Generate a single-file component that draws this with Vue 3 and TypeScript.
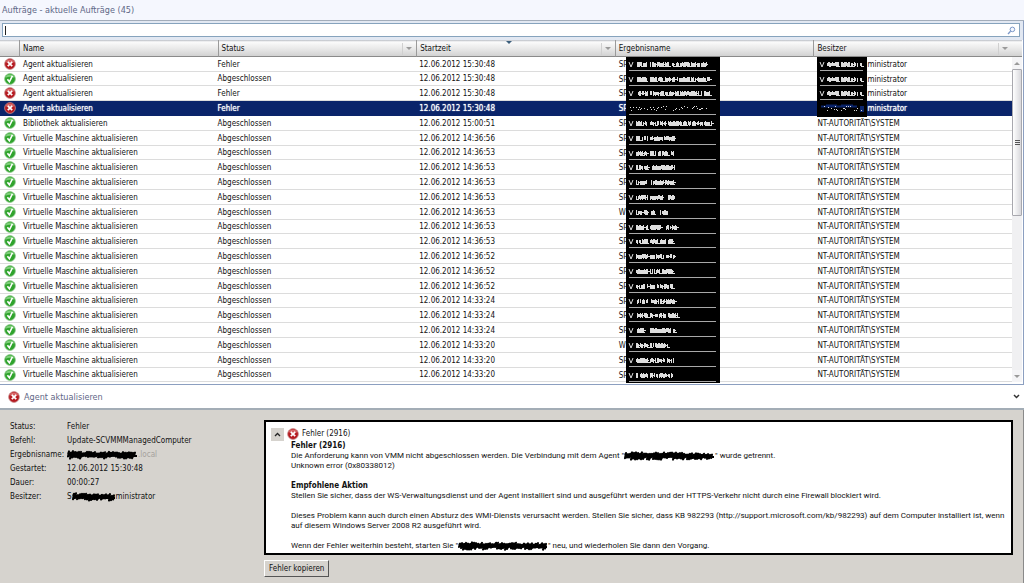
<script setup lang="ts">
import { ref } from 'vue'

interface Job {
  ok: boolean
  name: string
  status: string
  start: string
  prefix: string
  masked: number
  owner: string
  ownerMasked: boolean
}

const query = ref('')
const selected = ref(3)

const vm = 'Virtuelle Maschine aktualisieren'
const agent = 'Agent aktualisieren'

function job(ok: boolean, name: string, time: string, masked: number, prefix = 'SP', ownerMasked = false): Job {
  return {
    ok,
    name,
    status: ok ? 'Abgeschlossen' : 'Fehler',
    start: '12.06.2012 ' + time,
    prefix,
    masked,
    owner: ownerMasked ? 'ministrator' : 'NT-AUTORITÄT\\SYSTEM',
    ownerMasked,
  }
}

const jobs: Job[] = [
  job(false, agent, '15:30:48', 79, 'SP', true),
  job(true, agent, '15:30:48', 82, 'SP', true),
  job(false, agent, '15:30:48', 82, 'SP', true),
  job(false, agent, '15:30:48', 79, 'SP', true),
  job(true, 'Bibliothek aktualisieren', '15:00:51', 84),
  job(true, vm, '14:36:56', 48),
  job(true, vm, '14:36:53', 46),
  job(true, vm, '14:36:53', 47),
  job(true, vm, '14:36:53', 46),
  job(true, vm, '14:36:53', 47),
  job(true, vm, '14:36:53', 40, 'W'),
  job(true, vm, '14:36:53', 49),
  job(true, vm, '14:36:53', 45),
  job(true, vm, '14:36:52', 47),
  job(true, vm, '14:36:52', 47),
  job(true, vm, '14:36:52', 45),
  job(true, vm, '14:33:24', 47),
  job(true, vm, '14:33:24', 50),
  job(true, vm, '14:33:24', 47),
  job(true, vm, '14:33:20', 40, 'W'),
  job(true, vm, '14:33:20', 46),
  job(true, vm, '14:33:20', 45),
]

const columns = [
  { label: 'Name', filter: false, sorted: false },
  { label: 'Status', filter: true, sorted: false },
  { label: 'Startzeit', filter: true, sorted: true },
  { label: 'Ergebnisname', filter: false, sorted: false },
  { label: 'Besitzer', filter: true, sorted: false },
]

function random(seed: number): () => number {
  let s = seed * 7919 + 17
  return () => {
    s = (s * 16807) % 2147483647
    return s / 2147483647
  }
}

/* Broken white strokes that stay visible on a blacked-out cell. */
function residue(width: number, seed: number, sparse = false): string {
  const next = random(seed)
  let d = sparse ? '' : 'M3 5L5 10L7 5'
  for (let x = sparse ? 3 : 10; x < width + 2; x += 1) {
    if (x === 8 || x === 9 || x === 22 || x === 23) continue
    if (next() < (sparse ? 0.6 : 0.22)) continue
    if (sparse) {
      d += `M${x}.5 ${5 + Math.floor(next() * 5)}v1`
      continue
    }
    const top = 5 + Math.floor(next() * 2)
    const bottom = 9 + Math.floor(next() * 2)
    d += `M${x}.5 ${top}V${bottom}`
    if (next() < 0.45) d += `M${x} ${next() < 0.5 ? 7.5 : 9.5}h3`
  }
  return d
}

/* Dense marker scribble over a piece of text. */
function scribble(width: number, seed: number): string {
  const next = random(seed)
  let d = 'M1 4'
  for (let x = 2; x < width - 1; x += 2) {
    const lean = x / width
    d += `L${x} ${(1 + next() * 2 + lean).toFixed(1)}L${x - 1} ${(6 + next() * 2.8).toFixed(1)}`
  }
  return d + `M2 5L${width - 1} 6`
}
</script>

<template>
  <main class="console">
    <h1 class="title">Aufträge - aktuelle Aufträge (45)</h1>

    <div class="search-band">
      <label class="search">
        <span class="caret"></span>
        <input v-model="query" type="text" aria-label="Aufträge suchen" />
        <svg width="9" height="9" viewBox="0 0 9 9" aria-hidden="true">
          <circle cx="5.4" cy="3.4" r="2.3" fill="#f4f8ff" stroke="#7c98c8" />
          <path d="M3.6 5.2L1 8" stroke="#7c98c8" stroke-width="1.3" />
        </svg>
      </label>
    </div>

    <section class="jobs" aria-label="Aufträge">
      <table>
        <colgroup>
          <col class="icon-col" />
          <col v-for="c in columns" :key="c.label" />
        </colgroup>
        <thead>
          <tr>
            <th></th>
            <th v-for="c in columns" :key="c.label" scope="col">
              <div class="head">
                <span>{{ c.label }}</span>
                <i v-if="c.sorted" class="sort"></i>
                <button v-if="c.filter" type="button" class="filter" :aria-label="c.label + ' filtern'"></button>
              </div>
            </th>
          </tr>
        </thead>
        <tbody>
          <tr v-for="(j, i) in jobs" :key="i" :class="{ selected: i === selected }" @click="selected = i">
            <td class="state">
              <svg v-if="j.ok" width="12" height="12" viewBox="0 0 12 12" aria-label="OK">
                <circle cx="6" cy="6" r="5.4" fill="#2fa32c" stroke="#8cc88a" stroke-width=".8" />
                <path d="M1.6 4.8A4.6 4.6 0 0 1 10.4 4.8Q6 2.8 1.6 4.8" fill="#7fd07a" />
                <path d="M3.4 6.2L5.4 8.8L8.4 2.8" fill="none" stroke="#fff" stroke-width="1.6" />
              </svg>
              <svg v-else width="12" height="12" viewBox="0 0 12 12" aria-label="Fehler">
                <circle cx="6" cy="6" r="5.4" fill="#b51a20" stroke="#c99090" stroke-width=".8" />
                <path d="M1.6 4.8A4.6 4.6 0 0 1 10.4 4.8Q6 2.8 1.6 4.8" fill="#d9696a" />
                <path d="M3.8 3.8L8.2 8.2M8.2 3.8L3.8 8.2" stroke="#fff" stroke-width="1.8" />
              </svg>
            </td>
            <td>{{ j.name }}</td>
            <td>{{ j.status }}</td>
            <td>{{ j.start }}</td>
            <td class="top">
              <div class="masked">
                <span class="prefix">{{ j.prefix }}</span>
                <span class="block wide">
                  <svg width="94" height="16" viewBox="0 0 94 16" aria-hidden="true">
                    <path :d="residue(j.masked, i + 1, i === selected)" stroke="#dedede" fill="none" />
                    <path d="M3 13.5H90" stroke="#a8a8a8" />
                  </svg>
                </span>
              </div>
            </td>
            <td :class="{ top: j.ownerMasked }">
              <div v-if="j.ownerMasked" class="masked">
                <span class="block narrow">
                  <svg width="50" height="16" viewBox="0 0 50 16" aria-hidden="true">
                    <path v-if="i === selected" d="M4 5.5H40M9 4.5H20M24 4.5H36M44 5V11M46 5V11" stroke="#0a246a" stroke-width="2" />
                    <path :d="residue(43, i < 3 ? 41 : 9, i === selected)" stroke="#dcdcdc" fill="none" />
                    <path v-if="i !== selected" d="M3 13.5H46" stroke="#a8a8a8" />
                  </svg>
                </span>
                <span class="cell-text">{{ j.owner }}</span>
              </div>
              <template v-else>{{ j.owner }}</template>
            </td>
          </tr>
        </tbody>
      </table>
      <div class="scroll">
        <div class="scroll-head"></div>
        <button type="button" class="arrow up" aria-label="Nach oben"></button>
        <div class="track"><div class="thumb"><i></i></div></div>
        <button type="button" class="arrow down" aria-label="Nach unten"></button>
      </div>
    </section>

    <header class="detail-bar">
      <svg width="12" height="12" viewBox="0 0 12 12" aria-hidden="true">
        <circle cx="6" cy="6" r="5.4" fill="#b51a20" stroke="#c99090" stroke-width=".8" />
        <path d="M1.6 4.8A4.6 4.6 0 0 1 10.4 4.8Q6 2.8 1.6 4.8" fill="#d9696a" />
        <path d="M3.8 3.8L8.2 8.2M8.2 3.8L3.8 8.2" stroke="#fff" stroke-width="1.8" />
      </svg>
      <h2>Agent aktualisieren</h2>
      <button type="button" class="plain" aria-label="Details einklappen">
        <svg width="7" height="5" viewBox="0 0 7 5"><path d="M1 1L3.5 3.5L6 1" fill="none" stroke="#333" stroke-width="1.5" /></svg>
      </button>
    </header>

    <section class="details">
      <dl>
        <dt>Status:</dt>
        <dd>Fehler</dd>
        <dt>Befehl:</dt>
        <dd>Update-SCVMMManagedComputer</dd>
        <dt>Ergebnisname:</dt>
        <dd>
          <svg width="71" height="10" viewBox="0 0 71 10" aria-hidden="true"><path :d="scribble(71, 3)" class="ink" /></svg>
          <span class="faint">.local</span>
        </dd>
        <dt>Gestartet:</dt>
        <dd>12.06.2012 15:30:48</dd>
        <dt>Dauer:</dt>
        <dd>00:00:27</dd>
        <dt>Besitzer:</dt>
        <dd>
          <span>S</span>
          <svg width="44" height="10" viewBox="0 0 44 10" aria-hidden="true"><path :d="scribble(44, 5)" class="ink" /></svg>
          <span>ministrator</span>
        </dd>
      </dl>

      <div class="error-side">
        <article class="error-box">
          <div class="error-head">
            <button type="button" class="toggle" aria-label="Fehler einklappen">
              <svg width="7" height="5" viewBox="0 0 7 5"><path d="M1 4L3.5 1.5L6 4" fill="none" stroke="#222" stroke-width="1.3" /></svg>
            </button>
            <svg width="12" height="12" viewBox="0 0 12 12" aria-hidden="true">
              <circle cx="6" cy="6" r="5.4" fill="#b51a20" stroke="#c99090" stroke-width=".8" />
              <path d="M1.6 4.8A4.6 4.6 0 0 1 10.4 4.8Q6 2.8 1.6 4.8" fill="#d9696a" />
              <path d="M3.8 3.8L8.2 8.2M8.2 3.8L3.8 8.2" stroke="#fff" stroke-width="1.8" />
            </svg>
            <span>Fehler (2916)</span>
          </div>
          <div class="error-text">
            <h3>Fehler (2916)</h3>
            <p>
              Die Anforderung kann von VMM nicht abgeschlossen werden. Die Verbindung mit dem Agent "<svg width="91" height="10" viewBox="0 0 91 10" aria-hidden="true"><path :d="scribble(91, 8)" class="ink" /></svg>" wurde getrennt.<br />
              Unknown error (0x80338012)
            </p>
            <h3>Empfohlene Aktion</h3>
            <p>Stellen Sie sicher, dass der WS-Verwaltungsdienst und der Agent installiert sind und ausgeführt werden und der HTTPS-Verkehr nicht durch eine Firewall blockiert wird.</p>
            <p>Dieses Problem kann auch durch einen Absturz des WMI-Diensts verursacht werden. Stellen Sie sicher, dass KB 982293 (http://support.microsoft.com/kb/982293) auf dem Computer installiert ist, wenn auf diesem Windows Server 2008 R2 ausgeführt wird.</p>
            <p>
              Wenn der Fehler weiterhin besteht, starten Sie "<svg width="90" height="10" viewBox="0 0 90 10" aria-hidden="true"><path :d="scribble(90, 12)" class="ink" /></svg>" neu, und wiederholen Sie dann den Vorgang.
            </p>
          </div>
        </article>
        <button type="button" class="copy">Fehler kopieren</button>
      </div>
    </section>
  </main>
</template>

<style>
body {
  margin: 0;
  background: #d6d3ce;
}
</style>

<style scoped>
* {
  box-sizing: border-box;
}
.console {
  display: flex;
  flex-direction: column;
  min-height: 100vh;
  font: 8px/10px "DejaVu Sans Condensed", "DejaVu Sans", sans-serif;
  color: #111;
}
button {
  font: inherit;
  color: inherit;
  padding: 0;
}
h1,
h2,
h3,
p,
dl,
dd {
  margin: 0;
}
.title {
  height: 21px;
  padding-left: 2px;
  background: #f5f7fe;
  border-bottom: 1px solid #a3adba;
  color: #5f6787;
  font-size: 9px;
  font-weight: 400;
  line-height: 20px;
}
.search-band {
  padding: 2px 3px 3px 2px;
  background: #e2e8f2;
  border-right: 1px solid #8c9fc0;
}
.search {
  display: flex;
  align-items: center;
  height: 14px;
  padding: 0 3px 0 2px;
  background: #fff;
  border: 1px solid #86a3bd;
}
.caret {
  width: 1px;
  height: 9px;
  background: #222;
}
.search input {
  flex: 1;
  min-width: 0;
  height: 11px;
  padding: 0 2px;
  border: 0;
  outline: 0;
  background: transparent;
  font: inherit;
}
.jobs {
  display: flex;
  padding: 0 1px 2px 0;
  background: #fff;
  border-right: 1px solid #8c9fc0;
  border-bottom: 1px solid #8c9fc0;
}
table {
  flex: 1;
  width: 100%;
  min-width: 0;
  table-layout: fixed;
  border-collapse: separate;
  border-spacing: 0;
}
.icon-col {
  width: 19px;
}
th,
.scroll-head {
  height: 17px;
  padding: 0;
  background: linear-gradient(#b9bdc4, #fbfbfb 12%, #e6e6e6 60%, #d2d2d2);
  border-bottom: 1px solid #8a8a8a;
  font-weight: 400;
  text-align: left;
}
th + th {
  border-left: 1px solid #9a9a9a;
}
.head {
  position: relative;
  display: flex;
  align-items: center;
  justify-content: space-between;
  height: 16px;
  padding: 1px 0 0 3px;
}
.filter {
  width: 13px;
  height: 12px;
  margin-right: 1px;
  border: 0;
  border-left: 1px solid #d0d0d0;
  background: none;
}
.filter::after,
.sort::after,
.arrow::after {
  content: "";
  display: block;
  width: 0;
  margin: auto;
  border: 3px solid transparent;
  border-bottom: 0;
  border-top-color: #9a9a9a;
}
.sort {
  position: absolute;
  top: 1px;
  left: 45%;
}
.sort::after {
  border-top-color: #3c5f7c;
}
td {
  height: 15px;
  padding: 1px 0 0;
  border-bottom: 1px solid #dcdcdc;
  background: #fff;
  white-space: nowrap;
}
tbody tr:nth-child(5n + 2) td {
  height: 14px;
}
td:nth-child(2),
td:nth-child(5),
td:nth-child(6) {
  padding-left: 4px;
}
td:nth-child(4) {
  padding-left: 3px;
}
td.top {
  padding-top: 0;
  vertical-align: top;
}
.state {
  padding: 0 0 0 4px;
}
svg {
  display: block;
  flex: none;
}
.selected td {
  background: #0a246a;
  border-bottom-color: #0a246a;
  color: #fff;
  text-shadow: 0 0 1px #fff;
}
.masked {
  display: flex;
  align-items: flex-start;
  height: 13px;
}
.prefix,
.cell-text {
  padding-top: 3px;
}
.prefix {
  width: 7px;
}
.block {
  position: relative;
  height: 16px;
  background: #000;
}
tbody tr:last-child .block {
  height: 15px;
}
.wide {
  width: 94px;
}
.narrow {
  width: 50px;
}
.scroll {
  display: flex;
  flex-direction: column;
  width: 10px;
  background: #f0f0f2;
}
.arrow {
  height: 12px;
  border: 0;
  background: #f4f4f6;
}
.up::after {
  transform: rotate(180deg);
}
.track {
  flex: 1;
}
.thumb {
  display: flex;
  align-items: center;
  justify-content: center;
  height: 49%;
  border: 1px solid #a8a8ae;
  border-radius: 1px;
  background: linear-gradient(90deg, #fff, #d8d8dc);
}
.thumb i {
  width: 5px;
  height: 6px;
  background: repeating-linear-gradient(#555 0 1px, transparent 1px 2px);
}
.detail-bar {
  display: flex;
  align-items: center;
  gap: 4px;
  height: 25px;
  padding: 0 4px 0 8px;
  background: #fff;
  border-bottom: 2px solid #a3adb6;
}
.detail-bar h2 {
  flex: 1;
  color: #5f6787;
  font-size: 9px;
  font-weight: 400;
}
.plain {
  border: 0;
  background: none;
}
.details {
  flex: 1;
  display: grid;
  grid-template-columns: 254px 1fr;
  padding: 10px 10px 5px;
  background: #d6d3ce;
  border-right: 1px solid #8a8a8a;
}
dl {
  display: grid;
  grid-template-columns: 57px 1fr;
  grid-auto-rows: 14px;
  line-height: 14px;
}
dd {
  display: flex;
  align-items: center;
}
.ink {
  fill: none;
  stroke: #000;
  stroke-width: 2;
  stroke-linejoin: round;
}
.faint {
  color: #a5a29d;
}
.error-box {
  padding: 5px 0 2px 5px;
  border: 2px solid #000;
  background: #fff;
}
.error-head {
  display: flex;
  align-items: center;
  gap: 3px;
  height: 14px;
}
.toggle {
  display: flex;
  align-items: center;
  justify-content: center;
  width: 13px;
  height: 13px;
  border: 0;
  background: #d6d3ce;
}
.error-text {
  padding-left: 20px;
  font-family: Roboto, sans-serif;
}
.error-text h3 {
  font-family: "DejaVu Sans Condensed", sans-serif;
  font-size: 8px;
  line-height: 10px;
}
.error-text p {
  margin-bottom: 10px;
}
.error-text p:last-child {
  margin-bottom: 0;
}
.error-text p svg {
  display: inline-block;
  vertical-align: top;
}
.copy {
  margin-top: 5px;
  height: 17px;
  padding: 0 4px;
  border: 1px solid;
  border-color: #fff #555 #555 #fff;
  background: #d6d3ce;
}
</style>
